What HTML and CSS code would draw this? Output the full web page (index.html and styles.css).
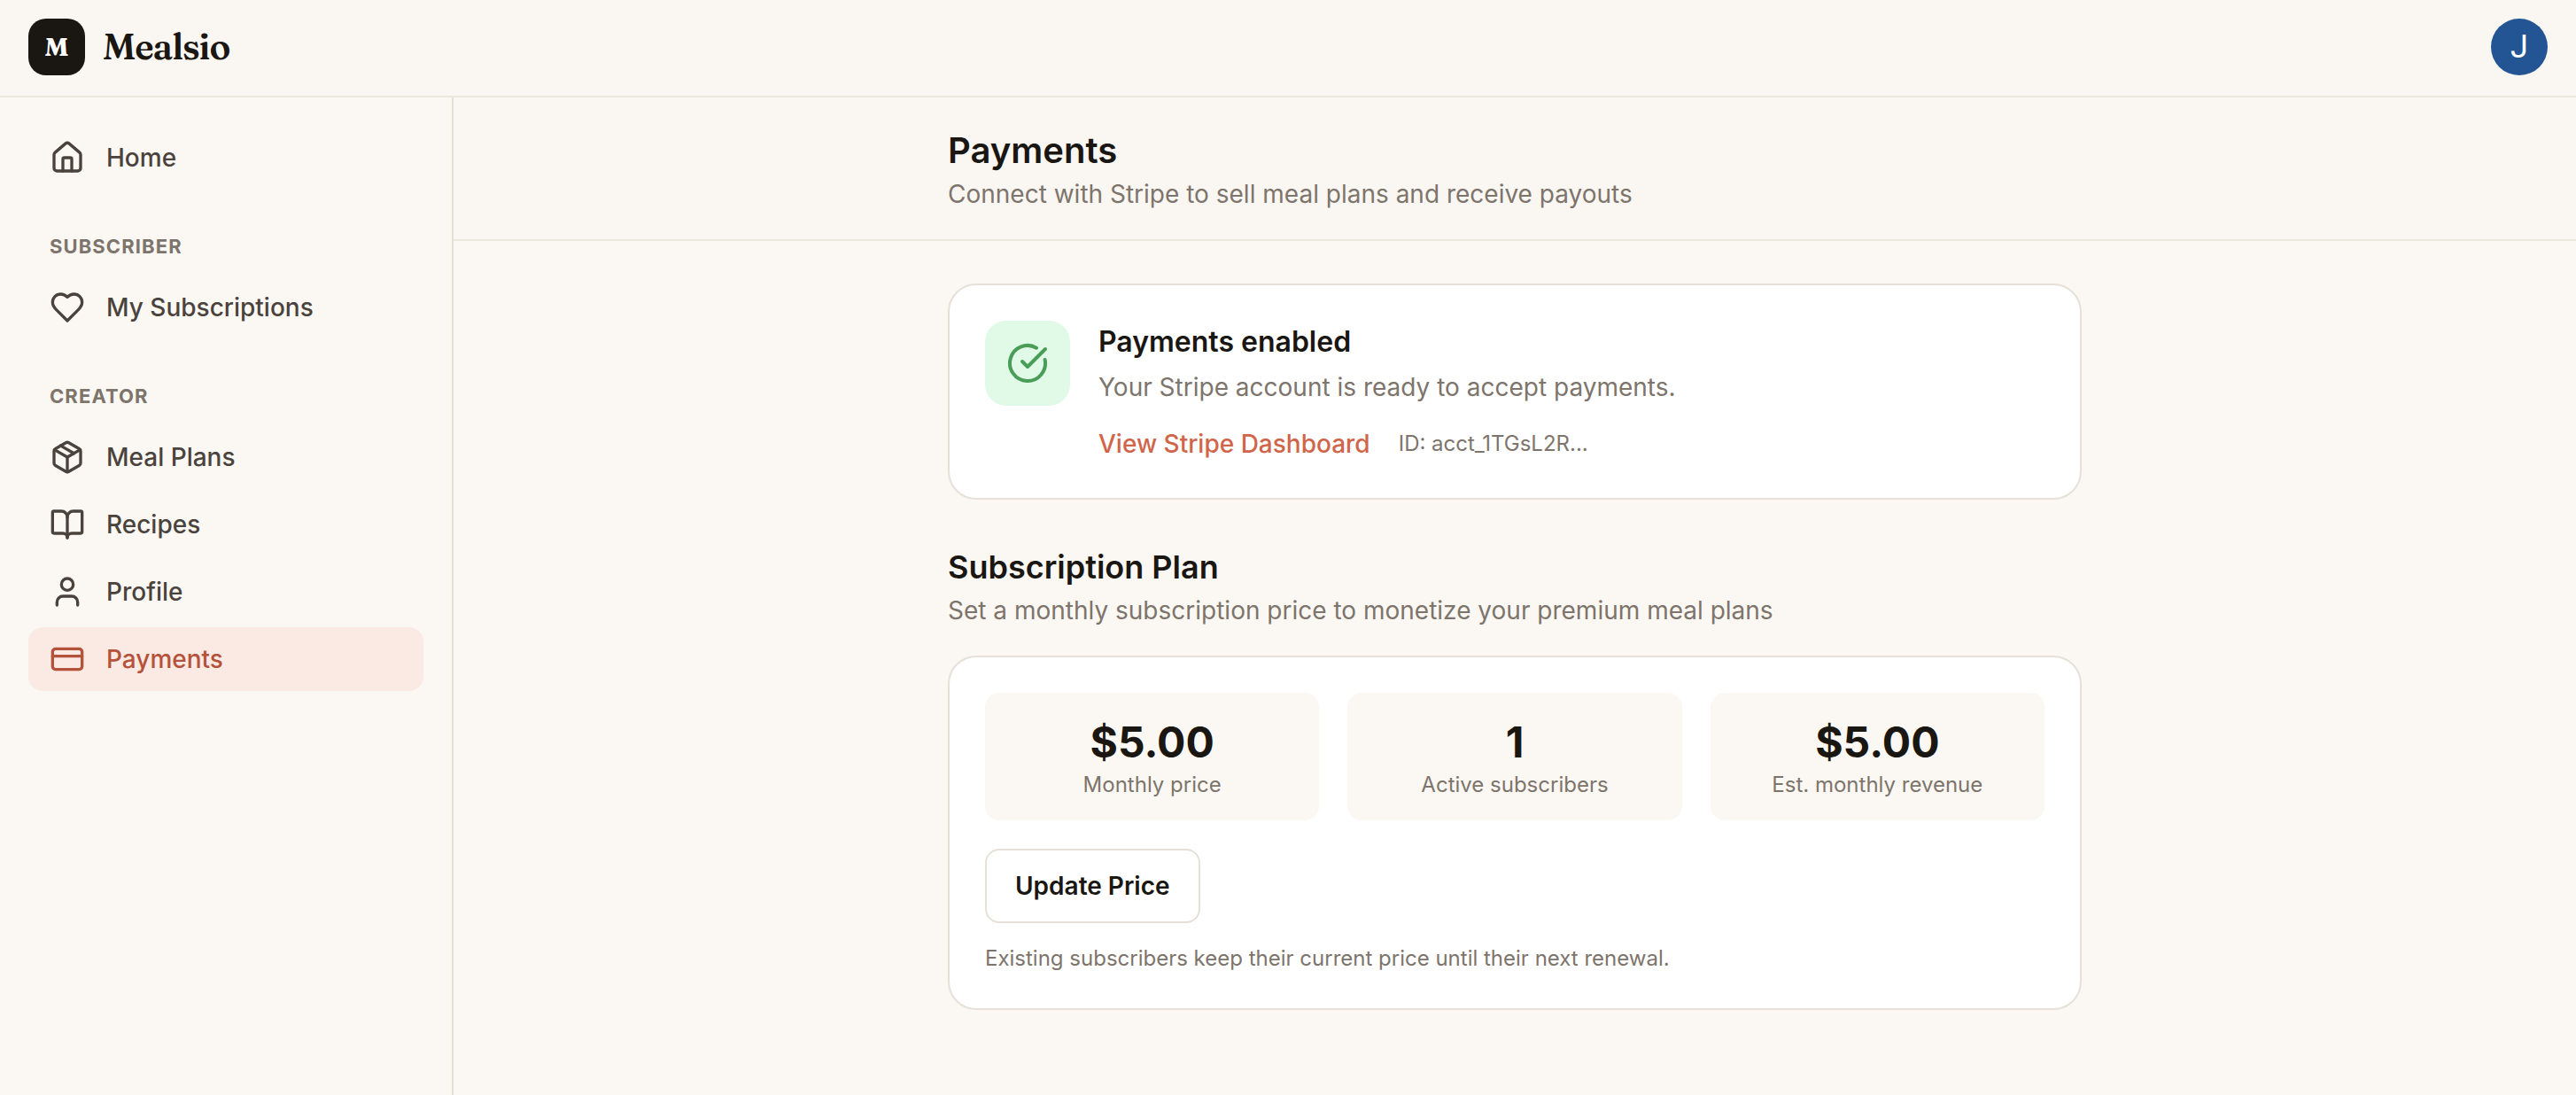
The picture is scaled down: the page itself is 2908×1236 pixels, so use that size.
FILE: index.html
```html
<!DOCTYPE html>
<html lang="en">
<head>
<meta charset="utf-8">
<meta name="viewport" content="width=device-width, initial-scale=1">
<title>Payments – Mealsio</title>
<link rel="stylesheet" href="styles.css">
</head>
<body>
<header class="topbar">
  <a class="brand" href="#">
    <span class="brand-mark" aria-hidden="true">M</span>
    <span class="brand-name">Mealsio</span>
  </a>
  <button class="avatar" type="button" aria-label="Account menu">J</button>
</header>
<div class="shell">
  <nav class="sidebar" aria-label="Main">
    <a class="nav-item" href="#">
      <svg class="icon" viewBox="0 0 24 24" aria-hidden="true"><path d="M15 21v-8a1 1 0 0 0-1-1h-4a1 1 0 0 0-1 1v8"/><path d="M3 10a2 2 0 0 1 .709-1.528l7-5.999a2 2 0 0 1 2.582 0l7 5.999A2 2 0 0 1 21 10v9a2 2 0 0 1-2 2H5a2 2 0 0 1-2-2z"/></svg>
      Home
    </a>
    <h2 class="nav-label">Subscriber</h2>
    <a class="nav-item" href="#">
      <svg class="icon" viewBox="0 0 24 24" aria-hidden="true"><path d="M19 14c1.49-1.46 3-3.21 3-5.5A5.5 5.5 0 0 0 16.5 3c-1.76 0-3 .5-4.5 2-1.5-1.5-2.74-2-4.5-2A5.5 5.5 0 0 0 2 8.500c0 2.300 1.500 4.050 3 5.500l7 7Z"/></svg>
      My Subscriptions
    </a>
    <h2 class="nav-label">Creator</h2>
    <a class="nav-item" href="#">
      <svg class="icon" viewBox="0 0 24 24" aria-hidden="true"><path d="M11 21.730a2 2 0 0 0 2 0l7-4A2 2 0 0 0 21 16V8a2 2 0 0 0-1-1.730l-7-4a2 2 0 0 0-2 0l-7 4A2 2 0 0 0 3 8v8a2 2 0 0 0 1 1.730z"/><path d="M12 22V12"/><path d="M3.290 7 12 12l8.710-5"/><path d="m7.500 4.270 9 5.150"/></svg>
      Meal Plans
    </a>
    <a class="nav-item" href="#">
      <svg class="icon" viewBox="0 0 24 24" aria-hidden="true"><path d="M12 7v14"/><path d="M3 18a1 1 0 0 1-1-1V4a1 1 0 0 1 1-1h5a4 4 0 0 1 4 4 4 4 0 0 1 4-4h5a1 1 0 0 1 1 1v13a1 1 0 0 1-1 1h-6a3 3 0 0 0-3 3 3 3 0 0 0-3-3z"/></svg>
      Recipes
    </a>
    <a class="nav-item" href="#">
      <svg class="icon" viewBox="0 0 24 24" aria-hidden="true"><path d="M19 21v-2a4 4 0 0 0-4-4H9a4 4 0 0 0-4 4v2"/><circle cx="12" cy="7" r="4"/></svg>
      Profile
    </a>
    <a class="nav-item nav-item-active" href="#" aria-current="page">
      <svg class="icon" viewBox="0 0 24 24" aria-hidden="true"><rect x="2" y="5" width="20" height="14" rx="2"/><path d="M2 10h20"/></svg>
      Payments
    </a>
  </nav>
  <main class="main">
    <div class="page-header">
      <div class="container">
        <h1 class="page-title">Payments</h1>
        <p class="subtitle">Connect with Stripe to sell meal plans and receive payouts</p>
      </div>
    </div>
    <div class="container content">
      <section class="card status">
        <span class="status-icon">
          <svg class="icon icon-large" viewBox="0 0 24 24" aria-hidden="true"><path d="M21.801 10A10 10 0 1 1 17 3.335"/><path d="m9 11 3 3L22 4"/></svg>
        </span>
        <div class="status-body">
          <h2 class="status-title">Payments enabled</h2>
          <p class="subtitle">Your Stripe account is ready to accept payments.</p>
          <div class="status-links">
            <a class="link" href="#">View Stripe Dashboard</a>
            <span class="small">ID: acct_1TGsL2R...</span>
          </div>
        </div>
      </section>
      <section class="plan">
        <h2 class="section-title">Subscription Plan</h2>
        <p class="subtitle">Set a monthly subscription price to monetize your premium meal plans</p>
        <div class="card plan-card">
          <dl class="stats">
            <div class="stat"><dt class="small">Monthly price</dt><dd class="stat-value">$5.00</dd></div>
            <div class="stat"><dt class="small">Active subscribers</dt><dd class="stat-value">1</dd></div>
            <div class="stat"><dt class="small">Est. monthly revenue</dt><dd class="stat-value">$5.00</dd></div>
          </dl>
          <button class="button" type="button">Update Price</button>
          <p class="small note">Existing subscribers keep their current price until their next renewal.</p>
        </div>
      </section>
    </div>
  </main>
</div>
</body>
</html>
```
FILE: styles.css
```css
:root {
  --bg: #fbf8f3;
  --bar: #faf7f2;
  --ink: #1a1612;
  --nav: #4a423c;
  --muted: #7d746c;
  --line: #e6e0d8;
  --line-soft: #ede8de;
  --accent: #d0654a;
  --accent-dark: #b5523a;
  --accent-bg: #fbeae4;
}

* { box-sizing: border-box; }

body {
  margin: 0;
  min-height: 100vh;
  display: flex;
  flex-direction: column;
  background: var(--bg);
  color: var(--ink);
  font: 400 28px/42px Inter, "Liberation Sans", sans-serif;
}

h1, h2, p, dl, dd { margin: 0; }
a { color: inherit; text-decoration: none; }

.topbar {
  display: flex;
  align-items: center;
  justify-content: space-between;
  padding: 21px 32px 23px;
  background: var(--bar);
  border-bottom: 2px solid var(--line-soft);
}

.brand { display: flex; align-items: center; gap: 20px; }

.brand-mark {
  display: grid;
  place-items: center;
  width: 64px;
  height: 64px;
  border-radius: 20px;
  background: var(--ink);
  color: #fff;
  font: 700 28px/40px Fraunces, "Liberation Serif", serif;
}

.brand-name {
  font: 600 40px/64px Fraunces, "Liberation Serif", serif;
  letter-spacing: -0.025em;
}

.avatar {
  width: 64px;
  height: 64px;
  padding: 0;
  border: 0;
  border-radius: 50%;
  background: #235594;
  color: #fff;
  font: 400 36px/64px Roboto, sans-serif;
}

.shell { flex: 1; display: flex; }

.sidebar {
  flex: 0 0 512px;
  display: flex;
  flex-direction: column;
  gap: 4px;
  padding: 32px;
  border-right: 2px solid var(--line);
}

.nav-item {
  display: flex;
  align-items: center;
  gap: 24px;
  padding: 16px 24px;
  border-radius: 16px;
  color: var(--nav);
  font-weight: 500;
  line-height: 40px;
}

.nav-item-active { background: var(--accent-bg); color: var(--accent-dark); }

.nav-label {
  margin: 44px 24px 12px;
  color: var(--muted);
  font-size: 22px;
  font-weight: 700;
  line-height: 33px;
  letter-spacing: 0.05em;
  text-transform: uppercase;
}

.icon {
  flex: none;
  width: 40px;
  height: 40px;
  fill: none;
  stroke: currentColor;
  stroke-width: 2;
  stroke-linecap: round;
  stroke-linejoin: round;
}

.icon-large { width: 48px; height: 48px; }

.main { flex: 1; min-width: 0; }

.page-header {
  padding: 32px 0 30px;
  background: var(--bar);
  border-bottom: 2px solid var(--line-soft);
}

.container { max-width: 1280px; margin: 0 auto; }
.content { padding: 48px 0; }

.page-title { font-size: 40px; font-weight: 600; line-height: 56px; }
.subtitle { color: var(--muted); }

.card {
  padding: 40px;
  background: #fff;
  border: 2px solid var(--line);
  border-radius: 32px;
}

.status { display: flex; align-items: flex-start; gap: 32px; }

.status-icon {
  display: grid;
  place-items: center;
  width: 96px;
  height: 96px;
  border-radius: 24px;
  background: #e1fae7;
  color: #4a9d58;
}

.status-title { margin-bottom: 6px; font-size: 32px; font-weight: 600; line-height: 48px; }
.status-links { display: flex; align-items: center; gap: 32px; margin-top: 22px; }
.link { color: var(--accent); font-weight: 500; }
.small { color: var(--muted); font-size: 24px; line-height: 36px; }

.plan { margin-top: 48px; }
.section-title { font-size: 36px; font-weight: 600; line-height: 56px; }
.plan-card { margin-top: 30px; }

.stats {
  display: grid;
  grid-template-columns: repeat(3, 1fr);
  gap: 32px;
}

.stat {
  display: flex;
  flex-direction: column-reverse;
  padding: 26px 24px 22px;
  border-radius: 16px;
  background: var(--bg);
  text-align: center;
}

.stat-value { font-size: 48px; font-weight: 700; line-height: 60px; }

.button {
  display: block;
  margin-top: 32px;
  padding: 19px 32px;
  border: 2px solid var(--line);
  border-radius: 16px;
  background: #fff;
  color: var(--ink);
  font: 600 28px/42px Inter, sans-serif;
}

.note { padding-top: 22px; margin-bottom: -2px; }
```
